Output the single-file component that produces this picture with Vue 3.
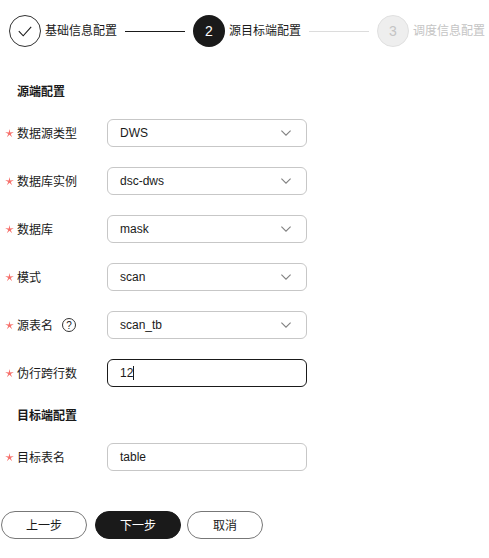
<script setup>
const source = [
  { label: '数据源类型', value: 'DWS', type: 'select' },
  { label: '数据库实例', value: 'dsc-dws', type: 'select' },
  { label: '数据库', value: 'mask', type: 'select' },
  { label: '模式', value: 'scan', type: 'select' },
  { label: '源表名', value: 'scan_tb', type: 'select', help: true },
  { label: '伪行跨行数', value: '12', type: 'focus' },
]
</script>

<template>
  <div class="page">
    <div class="steps">
      <div class="circle done">
        <svg width="14" height="11" viewBox="0 0 14 11"><path d="M.8 5.200l4.400 4.600 8-9" fill="none" stroke="#1a1a1a" stroke-width="1.100" /></svg>
      </div>
      <span class="step-text">基础信息配置</span>
      <span class="line dark"></span>
      <div class="circle active">2</div>
      <span class="step-text">源目标端配置</span>
      <span class="line light"></span>
      <div class="circle todo">3</div>
      <span class="step-text muted">调度信息配置</span>
    </div>

    <h3 class="section first">源端配置</h3>
    <div class="rows">
      <div v-for="r in source" :key="r.label" class="row">
        <svg class="star" width="9" height="9" viewBox="0 0 9 9"><path d="M4.500 0L5.260 3.450 8.780 3.110 5.740 4.900 7.150 8.140 4.500 5.800 1.850 8.140 3.260 4.900.22 3.110 3.740 3.450z" fill="#f66f6a" /></svg>
        <span class="label">{{ r.label }}</span>
        <span v-if="r.help" class="help">?</span>
        <div class="field" :class="{ focus: r.type === 'focus' }">
          <span>{{ r.value }}</span>
          <span v-if="r.type === 'focus'" class="caret"></span>
          <svg v-if="r.type === 'select'" class="chev" width="10" height="6" viewBox="0 0 10 6"><path d="M.4.6L5 5.200 9.600.6" fill="none" stroke="#808080" stroke-width="1.100" /></svg>
        </div>
      </div>
    </div>

    <h3 class="section second">目标端配置</h3>
    <div class="row">
      <svg class="star" width="9" height="9" viewBox="0 0 9 9"><path d="M4.500 0L5.260 3.450 8.780 3.110 5.740 4.900 7.150 8.140 4.500 5.800 1.850 8.140 3.260 4.900.22 3.110 3.740 3.450z" fill="#f66f6a" /></svg>
      <span class="label">目标表名</span>
      <div class="field"><span>table</span></div>
    </div>

    <div class="actions">
      <button class="btn">上一步</button>
      <button class="btn primary">下一步</button>
      <button class="btn small">取消</button>
    </div>
  </div>
</template>

<style>
html, body { margin: 0; background: #fff; }
</style>

<style scoped>
.page {
  width: 489px;
  height: 558px;
  box-sizing: border-box;
  padding-top: 15px;
  overflow: hidden;
  font: 12px "Liberation Sans", "Noto Sans CJK SC", sans-serif;
  color: #1a1a1a;
}
.steps { display: flex; align-items: center; padding-left: 9px; height: 32px; white-space: nowrap; }
.circle {
  width: 32px; height: 32px; box-sizing: border-box; border-radius: 50%;
  display: flex; align-items: center; justify-content: center;
  font-size: 14px; flex: none;
}
.done { border: 1px solid #333; }
.active { background: #1a1a1a; color: #fff; }
.todo { background: #eee; border: 1px solid #e0e0e0; color: #c4c4c4; }
.step-text { margin: -3px 0 0 4px; width: 72px; flex: none; }
.muted { color: #c4c4c4; }
.line { width: 60px; height: 1px; margin: 0 8px; flex: none; }
.dark { background: #1a1a1a; }
.light { background: #dcdcdc; }
.section { margin: 0; padding-left: 17px; font-size: 12px; line-height: 18px; font-weight: 700; }
.first { margin-top: 36px; }
.second { margin-top: 20px; }
.rows { display: flex; flex-direction: column; gap: 20px; margin-top: 18px; }
.row { display: flex; align-items: center; height: 28px; padding-left: 5px; position: relative; }
.second + .row { margin-top: 18px; }
.star { flex: none; margin: 0 3px 0 0; }
.label { white-space: nowrap; margin-top: -2px; }
.help {
  width: 14px; height: 14px; box-sizing: border-box; margin-left: 9px;
  border: 1px solid #333; border-radius: 50%;
  display: flex; align-items: center; justify-content: center; font-size: 10px;
}
.field {
  position: absolute; left: 107px; top: 0;
  width: 200px; height: 28px; box-sizing: border-box;
  border: 1px solid #c7c7c7; border-radius: 6px;
  padding-left: 12px; display: flex; align-items: center; line-height: 26px;
}
.focus { border-color: #1a1a1a; }
.caret { width: 1px; height: 14px; background: #1a1a1a; }
.chev { position: absolute; right: 15px; top: 10px; }
.actions { display: flex; margin-top: 40px; padding-left: 1px; }
.btn {
  width: 86px; height: 28px; box-sizing: border-box; padding: 0 0 2px;
  border: 1px solid #777; border-radius: 14px; background: #fff; color: #1a1a1a;
  font: inherit; margin-right: 8px;
}
.primary { background: #1a1a1a; border-color: #1a1a1a; color: #fff; margin-right: 6px; }
.small { width: 76px; }
</style>
